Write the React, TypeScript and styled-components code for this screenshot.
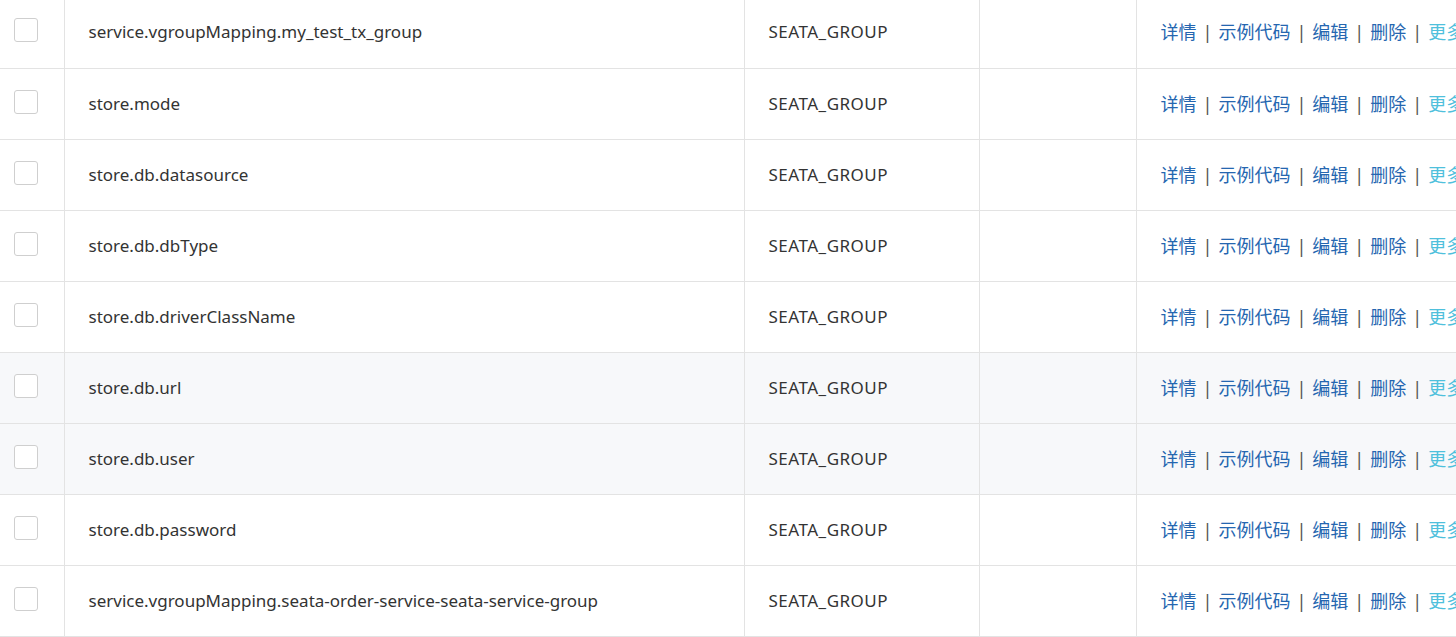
import React from 'react';
import styled, { createGlobalStyle } from 'styled-components';

const GlobalStyle = createGlobalStyle`
	html, body {
		margin: 0;
		padding: 0;
		background: #ffffff;
		overflow: hidden;
	}
	body {
		font-family: "Noto Sans", "Noto Sans CJK SC", sans-serif;
		color: #333333;
	}
`;

interface ConfigRow {
	dataId: string;
	group: string;
	highlighted?: boolean;
}

const rows: ConfigRow[] = [
	{ dataId: 'service.vgroupMapping.my_test_tx_group', group: 'SEATA_GROUP' },
	{ dataId: 'store.mode', group: 'SEATA_GROUP' },
	{ dataId: 'store.db.datasource', group: 'SEATA_GROUP' },
	{ dataId: 'store.db.dbType', group: 'SEATA_GROUP' },
	{ dataId: 'store.db.driverClassName', group: 'SEATA_GROUP' },
	{ dataId: 'store.db.url', group: 'SEATA_GROUP', highlighted: true },
	{ dataId: 'store.db.user', group: 'SEATA_GROUP', highlighted: true },
	{ dataId: 'store.db.password', group: 'SEATA_GROUP' },
	{ dataId: 'service.vgroupMapping.seata-order-service-seata-service-group', group: 'SEATA_GROUP' }
];

const actions = ['详情', '示例代码', '编辑', '删除'];

const App: React.FC = () => (
	<>
		<GlobalStyle />
		<TableWrap>
			<Table>
				<colgroup>
					<col style={{ width: 64 }} />
					<col style={{ width: 680 }} />
					<col style={{ width: 235 }} />
					<col style={{ width: 157 }} />
					<col style={{ width: 420 }} />
				</colgroup>
				<tbody>
					{rows.map((row) => (
						<Row key={row.dataId} highlighted={row.highlighted}>
							<CheckCell>
								<Checkbox />
							</CheckCell>
							<Cell>{row.dataId}</Cell>
							<GroupCell>{row.group}</GroupCell>
							<Cell />
							<ActionCell>
								{actions.map((label) => (
									<React.Fragment key={label}>
										<ActionLink>{label}</ActionLink>
										<Divider>|</Divider>
									</React.Fragment>
								))}
								<MoreLink>更多</MoreLink>
							</ActionCell>
						</Row>
					))}
				</tbody>
			</Table>
		</TableWrap>
	</>
);

export default App;

const TableWrap = styled.div`
	width: 1456px;
	height: 637px;
	overflow: hidden;
`;

const Table = styled.table`
	margin-top: -3px;
	width: 1556px;
	table-layout: fixed;
	border-collapse: collapse;
	font-size: 17px;
	line-height: 24px;
`;

interface RowProps {
	highlighted?: boolean;
}

const Row = styled.tr<RowProps>`
	height: 71px;
	background: ${({ highlighted }) => (highlighted ? '#f7f8fa' : '#ffffff')};
	border-bottom: 1px solid #e3e3e3;
`;

const Cell = styled.td`
	padding: 0 24px;
	vertical-align: middle;
	white-space: nowrap;
	overflow: hidden;
	border-right: 1px solid #e3e3e3;
	color: #333333;
`;

const GroupCell = styled(Cell)`
	letter-spacing: 0.5px;
`;

const CheckCell = styled.td`
	padding: 21px 0 0 14px;
	vertical-align: top;
	border-right: 1px solid #e3e3e3;
`;

const Checkbox = styled.span`
	display: block;
	box-sizing: border-box;
	width: 24px;
	height: 24px;
	border: 1px solid #cfcfcf;
	border-radius: 3px;
	background: #ffffff;
`;

const ActionCell = styled.td`
	padding: 0 24px;
	vertical-align: middle;
	white-space: nowrap;
	overflow: hidden;
	font-size: 18px;
`;

const ActionLink = styled.a`
	color: #2566b0;
	cursor: pointer;
	text-decoration: none;
`;

const MoreLink = styled(ActionLink)`
	color: #4fc0dc;
`;

const Divider = styled.span`
	margin: 0 6px;
	color: #555555;
`;
